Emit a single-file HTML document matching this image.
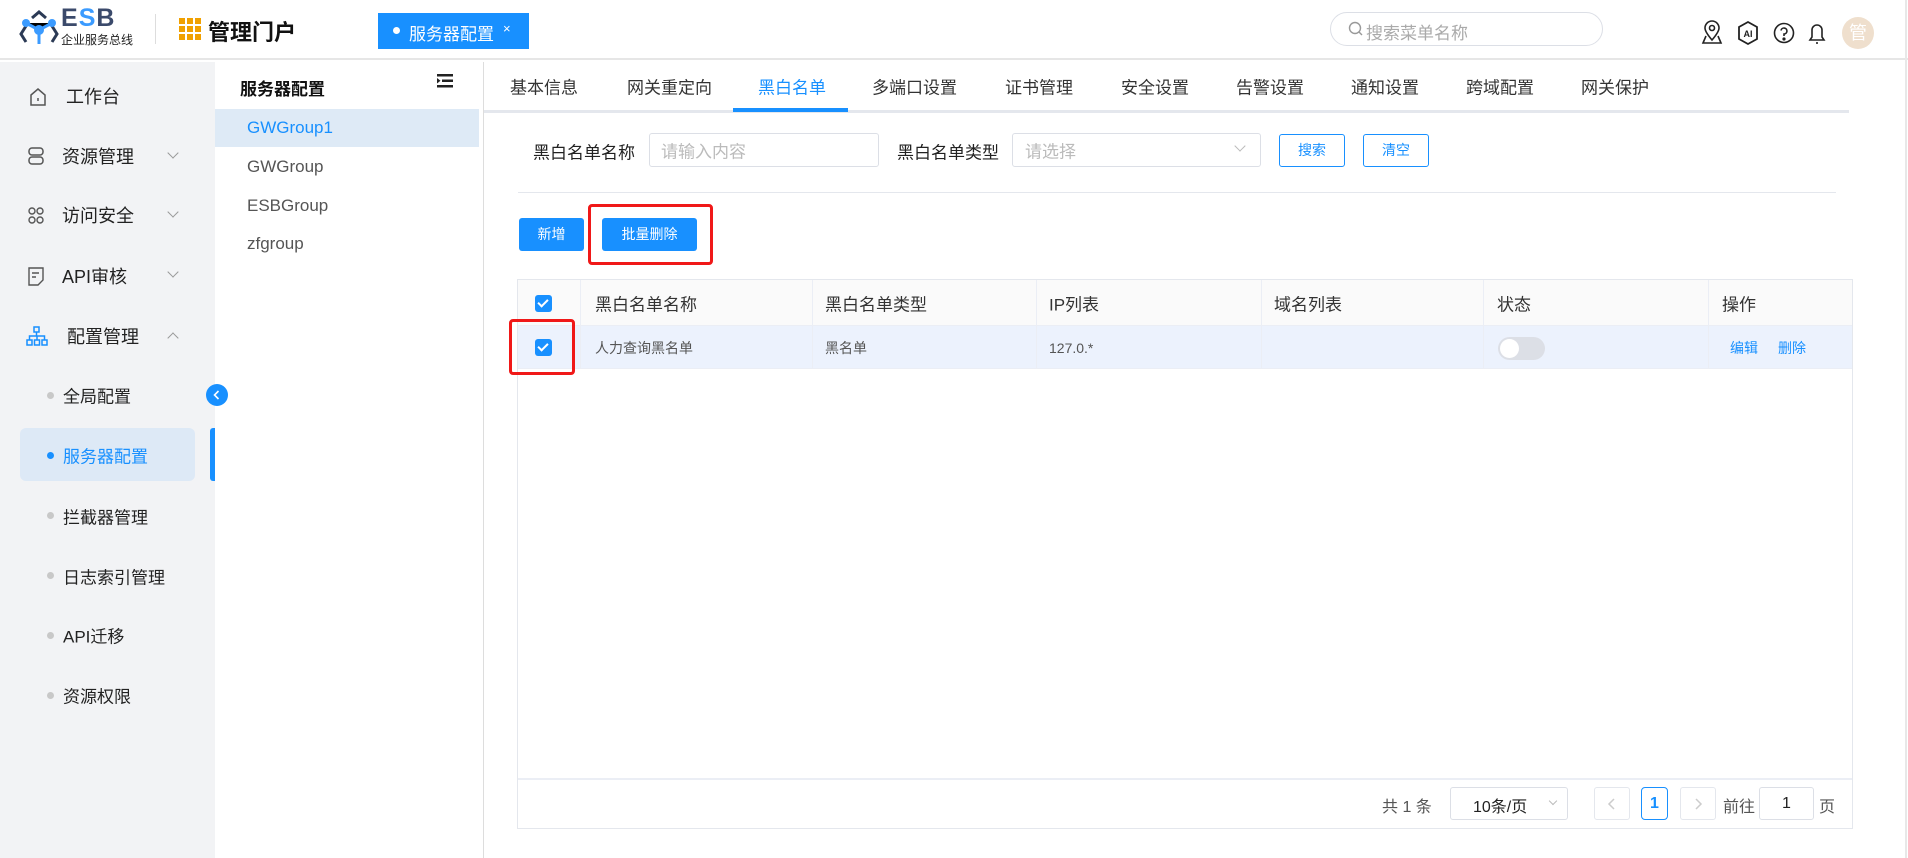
<!DOCTYPE html>
<html><head><meta charset="utf-8">
<style>
*{margin:0;padding:0;box-sizing:border-box}
body{width:1908px;height:858px;overflow:hidden;background:#fff;font-family:"Liberation Sans","Noto Sans CJK SC",sans-serif;color:#222;position:relative}
.a{position:absolute;white-space:nowrap}
.c{transform:translateY(-50%)}
.side{font-size:18px;color:#222}
.sub{font-size:17px;color:#222}
.dot{width:7px;height:7px;border-radius:50%;background:#c8c8c8}
.tab{font-size:17px;color:#333;top:86px}
.th{font-size:17px;color:#333;top:303px}
.td{font-size:14px;color:#555;top:348px}
.cb{width:17px;height:17px;background:#1890ff;border-radius:3px}
.cb:after{content:"";position:absolute;left:5px;top:2px;width:4px;height:8px;border:solid #fff;border-width:0 2px 2px 0;transform:rotate(45deg)}
.chev{width:8px;height:8px;border:solid #999;border-width:0 1.3px 1.3px 0}
</style></head><body>
<!-- header -->
<div class="a" style="left:0;top:0;width:1908px;height:60px;border-bottom:2px solid #e6e6e6"></div>
<svg class="a" style="left:18px;top:10px" width="42" height="36" viewBox="0 0 42 36">
<path d="M14 8 L21 2 L28 8" fill="none" stroke="#2b3a55" stroke-width="3"/>
<path d="M8 16 L3 24 L8 32" fill="none" stroke="#2b3a55" stroke-width="3"/>
<path d="M34 16 L39 24 L34 32" fill="none" stroke="#2b3a55" stroke-width="3"/>
<path d="M8 13 L21 20 L34 13 M21 20 L21 34" stroke="#3b9bff" stroke-width="3"/>
<circle cx="8" cy="13" r="4" fill="#3b9bff"/><circle cx="34" cy="13" r="4" fill="#3b9bff"/><circle cx="21" cy="20" r="5" fill="#3b9bff"/>
</svg>
<div class="a" style="left:61px;top:5px;font-size:25px;font-weight:bold;color:#3b4a6b;letter-spacing:1px;line-height:26px">E<span style="color:#3b9bff">S</span>B</div>
<div class="a" style="left:61px;top:31px;font-size:12px;color:#222">企业服务总线</div>
<div class="a" style="left:155px;top:14px;width:1px;height:30px;background:#ddd"></div>
<svg class="a" style="left:179px;top:18px" width="22" height="22"><g fill="#f0a000">
<rect x="0" y="0" width="6" height="6"/><rect x="8" y="0" width="6" height="6"/><rect x="16" y="0" width="6" height="6"/>
<rect x="0" y="8" width="6" height="6"/><rect x="8" y="8" width="6" height="6"/><rect x="16" y="8" width="6" height="6"/>
<rect x="0" y="16" width="6" height="6"/><rect x="8" y="16" width="6" height="6"/><rect x="16" y="16" width="6" height="6"/></g></svg>
<div class="a" style="left:208px;top:15px;font-size:22px;font-weight:bold;color:#111">管理门户</div>
<div class="a" style="left:378px;top:13px;width:151px;height:36px;background:#1890ff"></div>
<div class="a dot" style="left:393px;top:27px;background:#fff"></div>
<div class="a" style="left:409px;top:20px;font-size:17px;color:#fff">服务器配置</div>
<div class="a" style="left:503px;top:21px;font-size:13px;color:#fff">×</div>
<div class="a" style="left:1330px;top:12px;width:273px;height:34px;border:1px solid #dcdfe6;border-radius:17px"></div>
<svg class="a" style="left:1348px;top:21px" width="16" height="16"><circle cx="7" cy="7" r="5.5" fill="none" stroke="#999" stroke-width="1.4"/><path d="M11 11 L14 14" stroke="#999" stroke-width="1.4"/></svg>
<div class="a" style="left:1366px;top:19px;font-size:17px;color:#aaa">搜索菜单名称</div>
<svg class="a" style="left:1700px;top:20px" width="24" height="26" viewBox="0 0 24 26" fill="none" stroke="#222" stroke-width="1.6">
<path d="M12 20 C6 13 5 10 5 8 A7 7 0 0 1 19 8 C19 10 18 13 12 20Z"/><circle cx="12" cy="8" r="2.5"/><path d="M6 16 L3 23 H21 L18 16"/></svg>
<svg class="a" style="left:1736px;top:20px" width="24" height="26" viewBox="0 0 24 26" fill="none" stroke="#222" stroke-width="1.8">
<path d="M12 2 L21 7 V19 L12 24 L3 19 V7Z"/><text x="12" y="17" font-size="9" font-family="Liberation Sans" font-weight="bold" fill="#222" stroke="none" text-anchor="middle">AI</text></svg>
<svg class="a" style="left:1772px;top:21px" width="24" height="24" fill="none" stroke="#222" stroke-width="1.6">
<circle cx="12" cy="12" r="9.5"/><path d="M9 9.5 A3 3 0 1 1 12 13 V15"/><circle cx="12" cy="18" r="0.8" fill="#222"/></svg>
<svg class="a" style="left:1806px;top:20px" width="22" height="26" fill="none" stroke="#222" stroke-width="1.6">
<path d="M4 20 H18 L16 17 V10 A5 5 0 0 0 6 10 V17Z"/><path d="M10 23 H12"/></svg>
<div class="a" style="left:1842px;top:17px;width:32px;height:32px;border-radius:50%;background:#efdfcd;color:#fff;font-size:18px;text-align:center;line-height:32px">管</div>
<!-- sidebar -->
<div class="a" style="left:0;top:62px;width:215px;height:796px;background:#f2f3f5"></div>
<svg class="a" style="left:29px;top:87px" width="18" height="20" fill="none" stroke="#555" stroke-width="1.5"><path d="M2 8 L9 2 L16 8 V18 H2Z"/><path d="M9 11 V14"/></svg>
<div class="a side c" style="left:66px;top:96px">工作台</div>
<svg class="a" style="left:28px;top:147px" width="16" height="18" fill="none" stroke="#555" stroke-width="1.5"><rect x="1" y="1" width="14" height="7" rx="3"/><rect x="1" y="10" width="14" height="7" rx="3"/></svg>
<div class="a side c" style="left:62px;top:156px">资源管理</div>
<div class="a chev" style="left:169px;top:149px;transform:rotate(45deg)"></div>
<svg class="a" style="left:28px;top:207px" width="16" height="18" fill="none" stroke="#555" stroke-width="1.4"><circle cx="4" cy="4" r="3"/><circle cx="12" cy="4" r="3"/><circle cx="4" cy="13" r="3"/><circle cx="12" cy="13" r="3"/></svg>
<div class="a side c" style="left:62px;top:215px">访问安全</div>
<div class="a chev" style="left:169px;top:208px;transform:rotate(45deg)"></div>
<svg class="a" style="left:28px;top:267px" width="16" height="19" fill="none" stroke="#555" stroke-width="1.4"><path d="M1 1 H15 V13 L10 18 H1Z"/><path d="M4 6 H11 M4 10 H8"/></svg>
<div class="a side c" style="left:62px;top:276px">API审核</div>
<div class="a chev" style="left:169px;top:268px;transform:rotate(45deg)"></div>
<svg class="a" style="left:26px;top:326px" width="22" height="20" fill="none" stroke="#1890ff" stroke-width="1.5"><rect x="8" y="1" width="5" height="5"/><rect x="1" y="14" width="5" height="5"/><rect x="8.5" y="14" width="5" height="5"/><rect x="16" y="14" width="5" height="5"/><path d="M10.5 6 V10 M3.5 14 V10 H18.5 V14 M11 10 V14"/></svg>
<div class="a side c" style="left:67px;top:336px">配置管理</div>
<div class="a chev" style="left:169px;top:334px;transform:rotate(-135deg)"></div>
<div class="a dot" style="left:47px;top:392px"></div>
<div class="a sub c" style="left:63px;top:395px">全局配置</div>
<div class="a" style="left:20px;top:428px;width:175px;height:53px;background:#dde9f6;border-radius:6px"></div>
<div class="a dot" style="left:47px;top:452px;background:#1890ff"></div>
<div class="a sub c" style="left:63px;top:455px;color:#1890ff">服务器配置</div>
<div class="a" style="left:210px;top:428px;width:5px;height:53px;background:#1890ff;border-radius:3px 0 0 3px"></div>
<div class="a dot" style="left:47px;top:512px"></div><div class="a sub c" style="left:63px;top:516px">拦截器管理</div>
<div class="a dot" style="left:47px;top:572px"></div><div class="a sub c" style="left:63px;top:576px">日志索引管理</div>
<div class="a dot" style="left:47px;top:632px"></div><div class="a sub c" style="left:63px;top:635px">API迁移</div>
<div class="a dot" style="left:47px;top:692px"></div><div class="a sub c" style="left:63px;top:695px">资源权限</div>
<!-- second panel -->
<div class="a" style="left:483px;top:62px;width:1px;height:796px;background:#ddd"></div>
<div class="a" style="left:240px;top:75px;font-size:17px;font-weight:bold;color:#111">服务器配置</div>
<svg class="a" style="left:437px;top:74px" width="16" height="14" fill="#222"><rect x="0" y="0" width="16" height="2.5"/><rect x="5" y="5.5" width="11" height="2.5"/><rect x="0" y="11" width="16" height="2.5"/><path d="M0 4 L3.5 6.8 L0 9.5Z"/></svg>
<div class="a" style="left:215px;top:109px;width:264px;height:38px;background:#deeaf6"></div>
<div class="a c" style="left:247px;top:128px;font-size:17px;color:#1890ff">GWGroup1</div>
<div class="a c" style="left:247px;top:167px;font-size:17px;color:#555">GWGroup</div>
<div class="a c" style="left:247px;top:206px;font-size:17px;color:#555">ESBGroup</div>
<div class="a c" style="left:247px;top:244px;font-size:17px;color:#555">zfgroup</div>
<div class="a" style="left:206px;top:384px;width:22px;height:22px;border-radius:50%;background:#1890ff"></div>
<svg class="a" style="left:211px;top:389px" width="12" height="12"><path d="M7.5 2 L3.5 6 L7.5 10" fill="none" stroke="#fff" stroke-width="1.6"/></svg>
<!-- main tabs -->
<div class="a" style="left:484px;top:110px;width:1365px;height:3px;background:#e4e7ed"></div>
<div class="a" style="left:733px;top:108px;width:115px;height:4px;background:#1890ff"></div>
<div class="a tab c" style="left:510px">基本信息</div>
<div class="a tab c" style="left:627px">网关重定向</div>
<div class="a tab c" style="left:758px;color:#1890ff">黑白名单</div>
<div class="a tab c" style="left:872px">多端口设置</div>
<div class="a tab c" style="left:1005px">证书管理</div>
<div class="a tab c" style="left:1121px">安全设置</div>
<div class="a tab c" style="left:1236px">告警设置</div>
<div class="a tab c" style="left:1351px">通知设置</div>
<div class="a tab c" style="left:1466px">跨域配置</div>
<div class="a tab c" style="left:1581px">网关保护</div>
<!-- form -->
<div class="a c" style="left:533px;top:151px;font-size:17px;color:#222">黑白名单名称</div>
<div class="a" style="left:649px;top:133px;width:230px;height:34px;border:1px solid #dcdfe6;border-radius:3px"></div>
<div class="a c" style="left:661px;top:150px;font-size:17px;color:#bbb">请输入内容</div>
<div class="a c" style="left:897px;top:151px;font-size:17px;color:#222">黑白名单类型</div>
<div class="a" style="left:1012px;top:133px;width:249px;height:34px;border:1px solid #dcdfe6;border-radius:3px"></div>
<div class="a c" style="left:1025px;top:150px;font-size:17px;color:#bbb">请选择</div>
<div class="a chev" style="left:1236px;top:142px;transform:rotate(45deg);border-color:#bbb"></div>
<div class="a" style="left:1279px;top:134px;width:66px;height:33px;border:1px solid #1890ff;border-radius:3px;color:#1890ff;font-size:14px;text-align:center;line-height:31px">搜索</div>
<div class="a" style="left:1363px;top:134px;width:66px;height:33px;border:1px solid #1890ff;border-radius:3px;color:#1890ff;font-size:14px;text-align:center;line-height:31px">清空</div>
<div class="a" style="left:518px;top:192px;width:1318px;height:1px;background:#e4e7ed"></div>
<div class="a" style="left:519px;top:218px;width:65px;height:33px;background:#1890ff;border-radius:3px;color:#fff;font-size:14px;text-align:center;line-height:33px">新增</div>
<div class="a" style="left:602px;top:218px;width:95px;height:33px;background:#1890ff;border-radius:3px;color:#fff;font-size:14px;text-align:center;line-height:33px">批量删除</div>
<div class="a" style="left:588px;top:204px;width:125px;height:61px;border:3px solid #f01818;border-radius:4px"></div>
<!-- table -->
<div class="a" style="left:517px;top:279px;width:1336px;height:550px;border:1px solid #e4e7ed"></div>
<div class="a" style="left:518px;top:280px;width:1334px;height:46px;background:#fafafa;border-bottom:1px solid #ebeef5"></div>
<div class="a" style="left:518px;top:326px;width:1334px;height:43px;background:#ecf2fd;border-bottom:1px solid #ebeef5"></div>
<div class="a" style="left:580px;top:280px;width:1px;height:89px;background:#ebeef5"></div>
<div class="a" style="left:812px;top:280px;width:1px;height:89px;background:#ebeef5"></div>
<div class="a" style="left:1036px;top:280px;width:1px;height:89px;background:#ebeef5"></div>
<div class="a" style="left:1261px;top:280px;width:1px;height:89px;background:#ebeef5"></div>
<div class="a" style="left:1483px;top:280px;width:1px;height:89px;background:#ebeef5"></div>
<div class="a" style="left:1708px;top:280px;width:1px;height:89px;background:#ebeef5"></div>
<div class="a cb" style="left:535px;top:295px"></div>
<div class="a th c" style="left:595px">黑白名单名称</div>
<div class="a th c" style="left:825px">黑白名单类型</div>
<div class="a th c" style="left:1049px">IP列表</div>
<div class="a th c" style="left:1274px">域名列表</div>
<div class="a th c" style="left:1497px">状态</div>
<div class="a th c" style="left:1722px">操作</div>
<div class="a cb" style="left:535px;top:339px"></div>
<div class="a" style="left:509px;top:319px;width:66px;height:56px;border:3px solid #f01818;border-radius:4px"></div>
<div class="a td c" style="left:595px">人力查询黑名单</div>
<div class="a td c" style="left:825px">黑名单</div>
<div class="a td c" style="left:1049px">127.0.*</div>
<div class="a" style="left:1498px;top:337px;width:47px;height:23px;border-radius:12px;background:#dcdfe6"></div>
<div class="a" style="left:1500px;top:339px;width:19px;height:19px;border-radius:50%;background:#fff"></div>
<div class="a td c" style="left:1730px;color:#1890ff">编辑</div>
<div class="a td c" style="left:1778px;color:#1890ff">删除</div>
<!-- pagination -->
<div class="a" style="left:518px;top:778px;width:1334px;height:2px;background:#ebeef5"></div>
<div class="a c" style="left:1382px;top:805px;font-size:16px;color:#555">共 1 条</div>
<div class="a" style="left:1450px;top:787px;width:118px;height:33px;border:1px solid #dcdfe6;border-radius:3px"></div>
<div class="a c" style="left:1473px;top:805px;font-size:16px;color:#222">10条/页</div>
<div class="a chev" style="left:1550px;top:798px;transform:rotate(45deg);border-color:#bbb;width:6px;height:6px"></div>
<div class="a" style="left:1594px;top:787px;width:36px;height:33px;border:1px solid #e4e7ed;border-radius:3px"></div>
<svg class="a" style="left:1606px;top:797px" width="12" height="14"><path d="M8 2 L3 7 L8 12" fill="none" stroke="#ccc" stroke-width="1.5"/></svg>
<div class="a" style="left:1641px;top:787px;width:27px;height:33px;border:1px solid #1890ff;border-radius:4px;color:#1890ff;font-size:16px;font-weight:bold;text-align:center;line-height:31px">1</div>
<div class="a" style="left:1680px;top:787px;width:36px;height:33px;border:1px solid #e4e7ed;border-radius:3px"></div>
<svg class="a" style="left:1692px;top:797px" width="12" height="14"><path d="M4 2 L9 7 L4 12" fill="none" stroke="#ccc" stroke-width="1.5"/></svg>
<div class="a c" style="left:1723px;top:805px;font-size:16px;color:#555">前往</div>
<div class="a" style="left:1759px;top:787px;width:55px;height:33px;border:1px solid #dcdfe6;border-radius:3px;font-size:16px;text-align:center;line-height:31px">1</div>
<div class="a c" style="left:1819px;top:805px;font-size:16px;color:#555">页</div>
<div class="a" style="left:1905px;top:0;width:2px;height:858px;background:#e8e8e8"></div>
</body></html>
